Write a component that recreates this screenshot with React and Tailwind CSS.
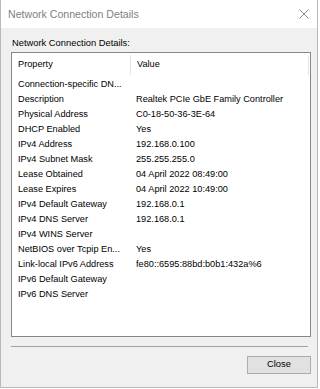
import React from "react";

const rows = [
  ["Connection-specific DN...", ""],
  ["Description", "Realtek PCIe GbE Family Controller"],
  ["Physical Address", "C0-18-50-36-3E-64"],
  ["DHCP Enabled", "Yes"],
  ["IPv4 Address", "192.168.0.100"],
  ["IPv4 Subnet Mask", "255.255.255.0"],
  ["Lease Obtained", "04 April 2022 08:49:00"],
  ["Lease Expires", "04 April 2022 10:49:00"],
  ["IPv4 Default Gateway", "192.168.0.1"],
  ["IPv4 DNS Server", "192.168.0.1"],
  ["IPv4 WINS Server", ""],
  ["NetBIOS over Tcpip En...", "Yes"],
  ["Link-local IPv6 Address", "fe80::6595:88bd:b0b1:432a%6"],
  ["IPv6 Default Gateway", ""],
  ["IPv6 DNS Server", ""],
];

export default function App() {
  return (
    <div className="w-[320px] h-[389px] bg-white" style={{ fontFamily: '"Liberation Sans", Arial, sans-serif' }}>
      <div className="w-[318px] h-[388px] flex flex-col border-x border-b border-[#b9b9b9] bg-[#f0f0f0]">
        <div className="h-[28px] bg-white flex items-center justify-between pl-[7px] pr-[7px] shrink-0">
          <span className="text-[10.6px] text-[#808080] leading-none">Network Connection Details</span>
          <svg width="10" height="10" viewBox="0 0 10 10" className="mr-[1px]">
            <path d="M0.5 0.5 L9.5 9.5 M9.5 0.5 L0.5 9.5" stroke="#8a8a8a" strokeWidth="1" fill="none" />
          </svg>
        </div>
        <div className="flex flex-col pl-[10px] pt-[9px]">
          <div className="text-[9.35px] leading-[12px] text-black pl-[1px]">Network Connection Details:</div>
          <div className="mt-[3px] w-[300px] h-[285px] border border-[#828790] bg-white flex flex-col">
            <div className="h-[24px] flex items-stretch text-[9.2px] text-black shrink-0">
              <div className="w-[118px] flex items-center pl-[6px]">Property</div>
              <div className="w-px bg-[#e5e5e5] my-[2px]" />
              <div className="flex-1 flex items-center pl-[6px]">Value</div>
              <div className="w-px bg-[#e5e5e5] my-[2px] mr-[1px]" />
            </div>
            <div className="flex flex-col">
              {rows.map(([k, v], i) => (
                <div key={i} className="h-[15px] flex items-center text-[9.2px] text-black leading-none">
                  <div className="w-[119px] pl-[6px] whitespace-nowrap">{k}</div>
                  <div className="pl-[5px] whitespace-nowrap">{v}</div>
                </div>
              ))}
            </div>
          </div>
          <div className="mt-[9px] w-[297px] h-px bg-[#a0a0a0]" />
          <div className="flex justify-end w-[300px] mt-[9px]">
            <button className="w-[64px] h-[18px] border border-[#adadad] bg-[#e1e1e1] text-[9.35px] text-black flex items-center justify-center leading-none">
              Close
            </button>
          </div>
        </div>
      </div>
    </div>
  );
}
